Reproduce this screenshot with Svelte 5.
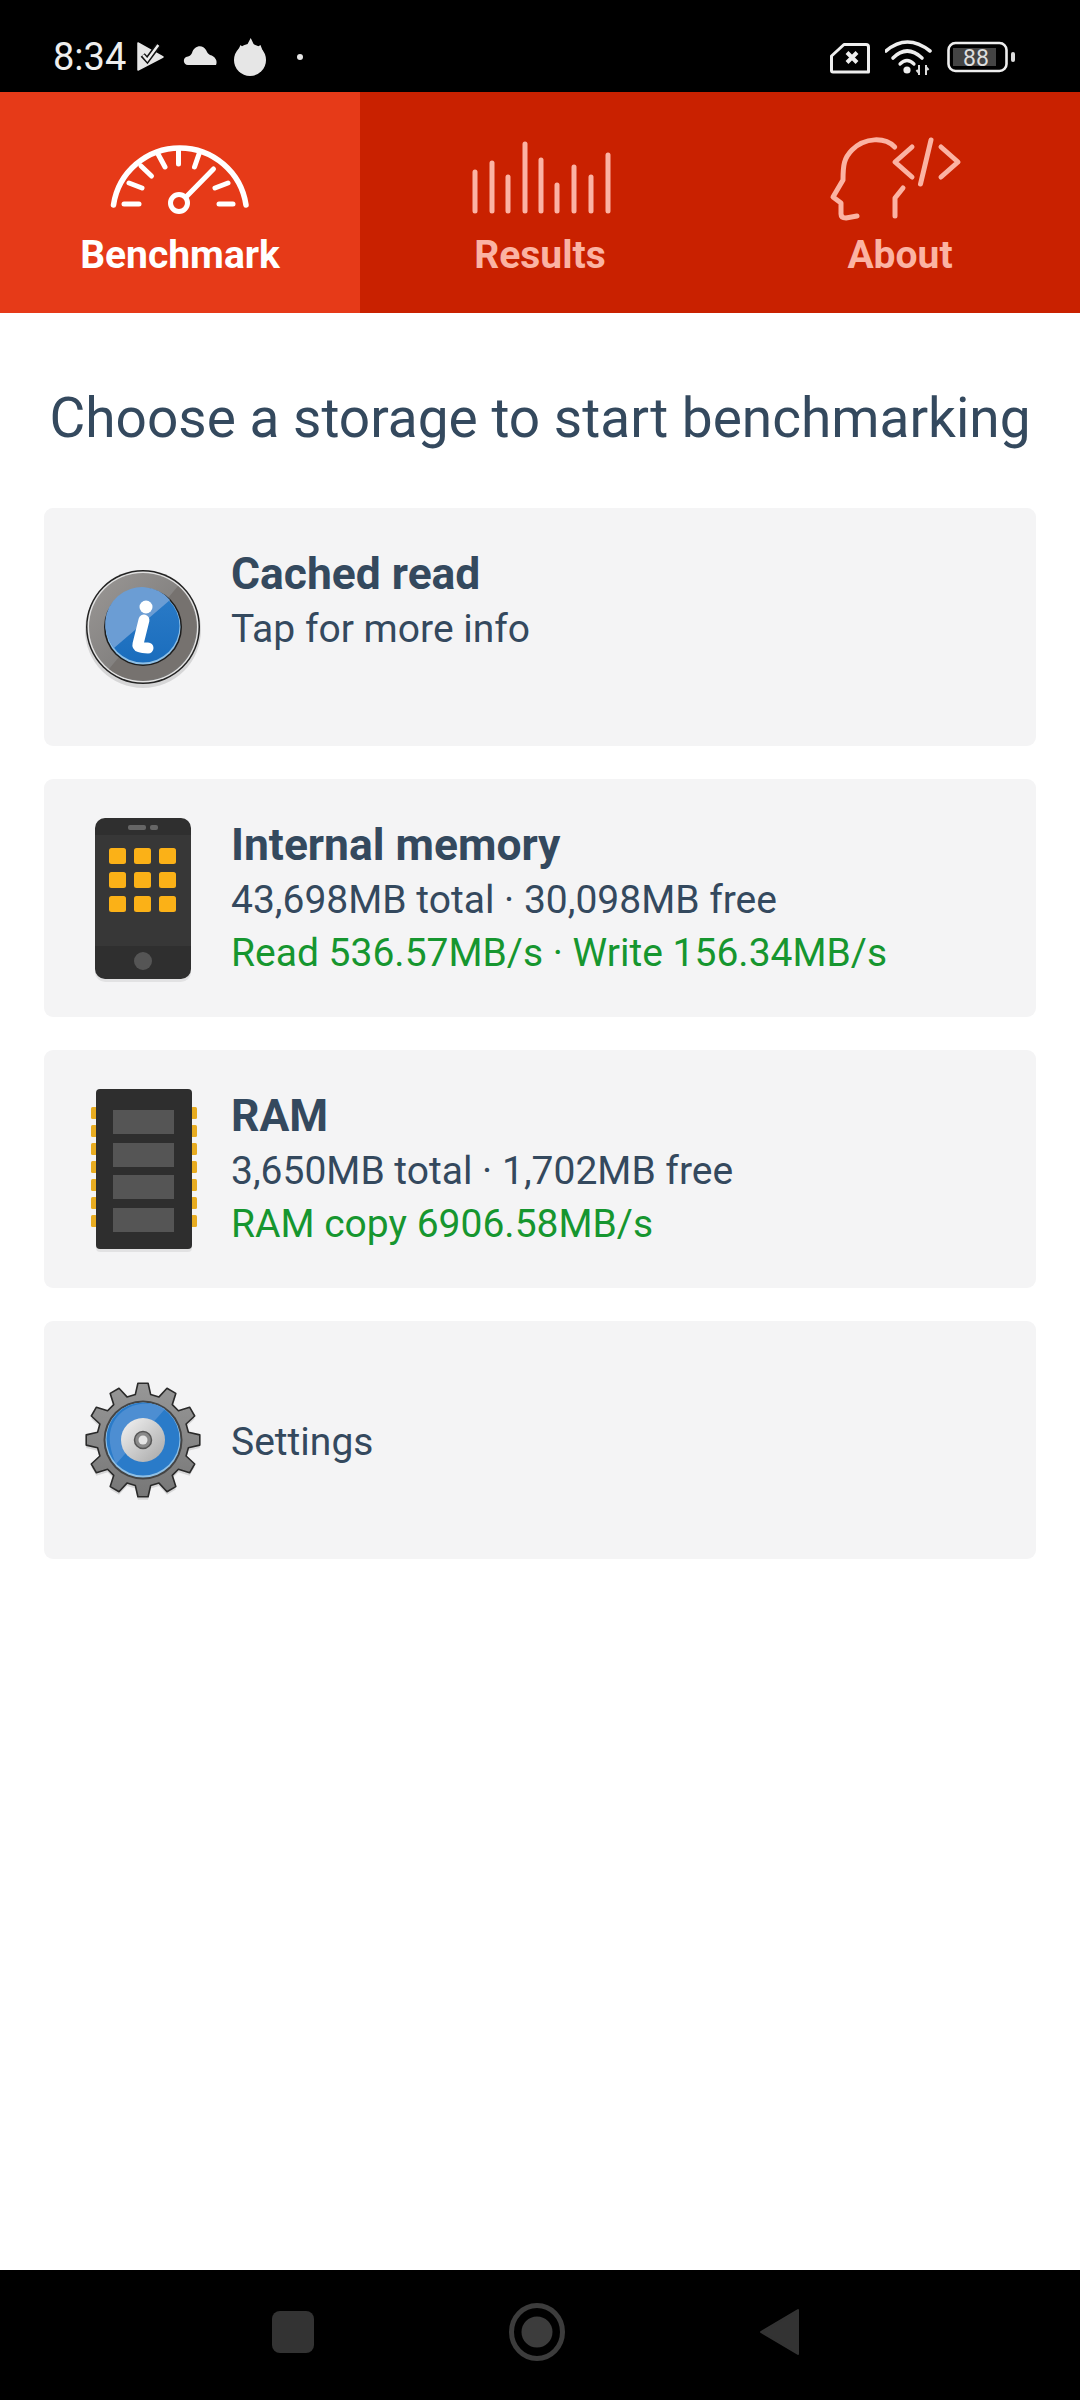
<script lang="ts">
  const tabs = ["Benchmark", "Results", "About"];

  const ticks = [
    [124, 204, 139, 204], [219, 204, 233, 204],
    [129, 183, 142, 188], [141, 166, 151.5, 176],
    [158, 154, 165, 167], [178.5, 151, 178.5, 164],
    [199, 154, 194.5, 167], [228, 183, 215, 188]
  ];
  const bars = [
    [475, 172], [492, 163], [508, 177], [525, 144], [541, 160],
    [557, 185], [574, 167], [591, 177], [608, 155]
  ];

  const appCols = [31, 56, 81];
  const appRows = [35, 59, 83];
  const chips = [26, 59, 91, 124];
  const pins = [23, 41, 59, 77, 95, 113, 131];

  function gearPath(cx: number, cy: number) {
    const teeth = 12;
    const pts: string[] = [];
    for (let i = 0; i < teeth; i++) {
      const a = (i / teeth) * Math.PI * 2 - Math.PI / 2;
      const step = (Math.PI * 2) / teeth;
      const corners = [
        [46, a - step * 0.32],
        [57, a - step * 0.17],
        [57, a + step * 0.17],
        [46, a + step * 0.32]
      ];
      for (const [r, t] of corners) {
        pts.push(`${(cx + r * Math.cos(t)).toFixed(1)},${(cy + r * Math.sin(t)).toFixed(1)}`);
      }
    }
    return pts.join(" ");
  }
</script>

<div class="page">
  <div class="status">
    <div class="status-left">
      <span class="time">8:34</span>
      <svg class="ic" viewBox="0 0 40 40">
        <path d="M4 6 L29 20 L4 33 Z" fill="#e6e6e6" stroke="#e6e6e6" stroke-width="1.5" stroke-linejoin="round" />
        <path d="M8.7 18 L13.3 23 L24.3 8" fill="none" stroke="#111" stroke-width="5.5" />
        <path d="M9 18 L13.3 23 L24.3 8" fill="none" stroke="#eee" stroke-width="2.4" />
      </svg>
      <svg class="ic" viewBox="0 0 40 40">
        <path d="M8 28 C3 28 2 20 8 19.5 C10 19 11 18 12 16 C14 8 23 7 26 13 C27 15 28 17 30 18 C35 19 38 24 36 28 Z" fill="#e6e6e6" />
      </svg>
      <svg class="ic" viewBox="0 0 40 40">
        <path d="M9 20 L14.5 8 L19 12 L24.7 1 L29.5 11 L34.5 8 L39 20 Z" fill="#e6e6e6" />
        <circle cx="24" cy="23" r="16" fill="#e6e6e6" />
      </svg>
      <svg class="ic" viewBox="0 0 40 40"><circle cx="28" cy="20" r="3" fill="#e6e6e6" /></svg>
    </div>
    <div class="status-right">
      <svg class="ic" viewBox="0 0 40 40">
        <path d="M14 7.5 H36 Q38.5 7.5 38.5 10 V35 H3 Q1.5 35 1.5 33.5 V19 Z" fill="none" stroke="#eee" stroke-width="3" stroke-linejoin="round" />
        <path d="M17 15.5 L27 25.5 M27 15.5 L17 25.5" stroke="#eee" stroke-width="4" />
      </svg>
      <svg class="ic wifi" viewBox="0 0 47 40">
        <path d="M1 14 Q22 -4 45 14" fill="none" stroke="#eee" stroke-width="3.6" stroke-linecap="round" />
        <path d="M8 21 Q22 7 37 21" fill="none" stroke="#eee" stroke-width="3.6" stroke-linecap="round" />
        <path d="M15 27 Q22 20 29 27" fill="none" stroke="#eee" stroke-width="3.2" stroke-linecap="round" />
        <circle cx="22" cy="33" r="3.6" fill="#eee" />
        <path d="M34 28 V38 M31.5 33 L34 36 M41 28 V38 M41 30 L43.5 33" fill="none" stroke="#ddd" stroke-width="2" />
      </svg>
      <svg class="ic battery" viewBox="0 0 68 40">
        <rect x="1.5" y="6" width="58" height="28" rx="7" fill="none" stroke="#eee" stroke-width="2.6" />
        <rect x="6" y="11" width="43" height="18" fill="#444" />
        <text x="29" y="28.5" text-anchor="middle" class="batt-text">88</text>
        <rect x="64" y="15" width="4" height="10" rx="2" fill="#ddd" />
      </svg>
    </div>
  </div>

  <div class="tabs">
    {#each tabs as tab, i}
      <div class="tab" class:active={i === 0}>
        {#if i === 0}
          <svg viewBox="100 130 160 100" class="tab-icon">
            <path d="M113.5 205 A67 67 0 0 1 246 205" fill="none" stroke="currentColor" stroke-width="5.5" stroke-linecap="round" />
            {#each ticks as t}
              <line x1={t[0]} y1={t[1]} x2={t[2]} y2={t[3]} stroke="currentColor" stroke-width="5" stroke-linecap="round" />
            {/each}
            <line x1="186" y1="197" x2="213.5" y2="169" stroke="currentColor" stroke-width="5" stroke-linecap="round" />
            <circle cx="179" cy="203" r="8.5" fill="none" stroke="currentColor" stroke-width="5" />
          </svg>
        {:else if i === 1}
          <svg viewBox="460 130 160 100" class="tab-icon">
            {#each bars as b}
              <line x1={b[0]} y1={b[1]} x2={b[0]} y2="211" stroke="currentColor" stroke-width="5" stroke-linecap="round" />
            {/each}
          </svg>
        {:else}
          <svg viewBox="820 130 160 100" class="tab-icon">
            <path d="M894.7 147 C885 137 865 137 852 150 C844 158 843 165 843 180 L833 197 L841 203 V214 Q841 218 846 218 L857 216" fill="none" stroke="currentColor" stroke-width="5" stroke-linecap="round" stroke-linejoin="round" />
            <path d="M903 188 L895 198 V216" fill="none" stroke="currentColor" stroke-width="5" stroke-linecap="round" stroke-linejoin="round" />
            <path d="M912 147 L895 162 L912 177 M931 140 L920.5 184 M941 147 L958 162 L941 177" fill="none" stroke="currentColor" stroke-width="5" stroke-linecap="round" stroke-linejoin="round" />
          </svg>
        {/if}
        <span class="tab-label">{tab}</span>
      </div>
    {/each}
  </div>

  <h1>Choose a storage to start benchmarking</h1>

  <div class="cards">
    <div class="card">
      <svg class="card-icon" viewBox="0 0 130 170">
        <defs>
          <linearGradient id="ring" x1="0" y1="0" x2="1" y2="1">
            <stop offset="0" stop-color="#9b9896" />
            <stop offset="1" stop-color="#6f6e6d" />
          </linearGradient>
          <linearGradient id="blue" x1="0" y1="0" x2="0" y2="1">
            <stop offset="0" stop-color="#2c7cc8" />
            <stop offset="1" stop-color="#1a6dbd" />
          </linearGradient>
        </defs>
        <ellipse cx="65" cy="88" rx="58" ry="58" fill="#000" opacity="0.12" />
        <circle cx="65" cy="85" r="57" fill="#222" />
        <circle cx="65" cy="85" r="55.5" fill="#e2e2e2" />
        <circle cx="65" cy="85" r="54" fill="url(#ring)" />
        <path d="M31 127 L100 44 A54 54 0 0 1 31 127 Z" fill="#76726f" />
        <circle cx="65" cy="85" r="39" fill="#1d1d1d" />
        <circle cx="65" cy="85" r="37.5" fill="#8fc0e6" />
        <circle cx="65" cy="84" r="36.5" fill="url(#blue)" />
        <path d="M36 106 L92 58 A36.5 36.5 0 0 0 36 106 Z" fill="#6b9dd4" />
        <circle cx="68" cy="65" r="6.5" fill="#fff" />
        <path d="M66 78 L60 102 Q59 106 70 106" fill="none" stroke="#fff" stroke-width="11" stroke-linecap="round" stroke-linejoin="round" />
      </svg>
      <div class="info">
        <div class="title">Cached read</div>
        <div class="sub">Tap for more info</div>
      </div>
    </div>

    <div class="card">
      <svg class="card-icon" viewBox="0 0 130 170">
        <rect x="17" y="8" width="96" height="161" rx="10" fill="#000" opacity="0.07" />
        <rect x="17" y="5" width="96" height="161" rx="10" fill="#2f2f2f" />
        <rect x="17" y="22" width="96" height="111" fill="#373737" />
        <rect x="50" y="12" width="18" height="5" rx="2" fill="#666" />
        <rect x="72" y="12" width="8" height="5" rx="2" fill="#666" />
        {#each appRows as y}
          {#each appCols as x}
            <rect {x} {y} width="17" height="16" rx="2.5" fill="#fbb117" />
          {/each}
        {/each}
        <circle cx="65" cy="148" r="9" fill="#555" />
      </svg>
      <div class="info">
        <div class="title">Internal memory</div>
        <div class="sub">43,698MB total · 30,098MB free</div>
        <div class="result">Read 536.57MB/s · Write 156.34MB/s</div>
      </div>
    </div>

    <div class="card">
      <svg class="card-icon" viewBox="0 0 130 170">
        {#each pins as y}
          <rect x="13" {y} width="6" height="12" rx="1.5" fill="#e8ac20" />
          <rect x="113" {y} width="6" height="12" rx="1.5" fill="#e8ac20" />
        {/each}
        <rect x="18" y="8" width="96" height="160" rx="4" fill="#000" opacity="0.07" />
        <rect x="18" y="5" width="96" height="160" rx="4" fill="#2e2e2e" />
        {#each chips as y}
          <rect x="35" {y} width="61" height="24" fill="#555" />
        {/each}
      </svg>
      <div class="info">
        <div class="title">RAM</div>
        <div class="sub">3,650MB total · 1,702MB free</div>
        <div class="result">RAM copy 6906.58MB/s</div>
      </div>
    </div>

    <div class="card center">
      <svg class="card-icon" viewBox="0 0 130 170">
        <defs>
          <linearGradient id="gear" x1="0" y1="0" x2="0" y2="1">
            <stop offset="0" stop-color="#979797" />
            <stop offset="1" stop-color="#777" />
          </linearGradient>
          <linearGradient id="disc" x1="0" y1="0" x2="1" y2="1">
            <stop offset="0" stop-color="#f4f4f4" />
            <stop offset="1" stop-color="#a6a6a6" />
          </linearGradient>
        </defs>
        <polygon points={gearPath(65, 88)} fill="#000" opacity="0.12" />
        <polygon points={gearPath(65, 85)} fill="url(#gear)" stroke="#2a2a2a" stroke-width="1.6" stroke-linejoin="round" />
        <circle cx="65" cy="85" r="39.5" fill="#444" />
        <circle cx="65" cy="85" r="37.5" fill="#8fc0e6" />
        <circle cx="65" cy="84" r="36.5" fill="#2a7bc9" />
        <path d="M38 109 C30 90 29 75 39 62 C50 48 72 44 87 54 Z" fill="#5d97d6" opacity="0.7" />
        <circle cx="65" cy="85" r="22" fill="url(#disc)" />
        <circle cx="65" cy="85" r="8.5" fill="#8a8a8a" stroke="#555" stroke-width="1.5" />
        <circle cx="65" cy="85" r="4.5" fill="#e4e4e4" />
      </svg>
      <div class="info">
        <div class="plain">Settings</div>
      </div>
    </div>
  </div>

  <div class="nav">
    <span class="nav-square"></span>
    <svg class="nav-home" viewBox="0 0 56 58">
      <ellipse cx="28" cy="29" rx="25.5" ry="26.5" fill="none" stroke="#3c3c3c" stroke-width="5" />
      <ellipse cx="28" cy="29" rx="15.5" ry="15.5" fill="#3c3c3c" />
    </svg>
    <svg class="nav-back" viewBox="0 0 39 48">
      <path d="M38 2 V46 L1 24 Z" fill="#333" stroke="#333" stroke-width="2" stroke-linejoin="round" />
    </svg>
  </div>
</div>

<style>
  :global(body) {
    background: #fff;
  }

  .page {
    width: 1080px;
    height: 2400px;
    display: flex;
    flex-direction: column;
    font-family: Roboto, "Liberation Sans", sans-serif;
    color: #34495e;
    overflow: hidden;
  }

  .status {
    height: 92px;
    box-sizing: border-box;
    padding: 37px 65px 0 53px;
    background: #000;
    display: flex;
    justify-content: space-between;
    align-items: flex-start;
  }

  .status-left {
    display: flex;
    gap: 6px;
    align-items: center;
  }

  .status-right {
    display: flex;
    gap: 15px;
  }

  .time {
    font-size: 38px;
    line-height: 40px;
    color: #eee;
    margin-right: 2px;
  }

  .ic {
    width: 40px;
    height: 40px;
    display: block;
  }

  .ic.wifi {
    width: 47px;
  }

  .ic.battery {
    width: 68px;
  }

  .batt-text {
    font-family: Roboto, sans-serif;
    font-size: 23px;
    fill: #ddd;
  }

  .tabs {
    height: 221px;
    display: grid;
    grid-template-columns: repeat(3, 1fr);
    background: #c92100;
  }

  .tab {
    display: flex;
    flex-direction: column;
    align-items: center;
    padding-top: 38px;
    color: #fbb3a3;
  }

  .tab.active {
    background: #e63a18;
    color: #fff;
  }

  .tab-icon {
    width: 160px;
    height: 100px;
    display: block;
  }

  .tab-label {
    margin-top: 3px;
    font-size: 39px;
    line-height: 44px;
    font-weight: 700;
  }

  h1 {
    margin: 73px 0 58px;
    font-size: 55px;
    line-height: 64px;
    font-weight: 400;
    text-align: center;
    color: #34495e;
  }

  .cards {
    margin: 0 44px;
    display: flex;
    flex-direction: column;
    gap: 33px;
  }

  .card {
    height: 238px;
    box-sizing: border-box;
    padding: 0 0 0 34px;
    background: #f4f4f5;
    border-radius: 9px;
    display: flex;
    align-items: center;
    gap: 23px;
  }

  .card-icon {
    width: 130px;
    height: 170px;
    flex: none;
  }

  .info {
    align-self: flex-start;
    padding-top: 38px;
  }

  .card.center .info {
    align-self: center;
    padding-top: 4px;
  }

  .title {
    font-size: 44.4px;
    line-height: 57px;
    font-weight: 700;
  }

  .sub,
  .plain,
  .result {
    font-size: 39px;
    line-height: 53px;
  }

  .result {
    color: #16962f;
  }

  .nav {
    margin-top: auto;
    height: 130px;
    box-sizing: border-box;
    background: #000;
    padding: 0 0 6px 272px;
    display: flex;
    align-items: center;
    gap: 195px;
  }

  .nav-square {
    width: 42px;
    height: 42px;
    border-radius: 8px;
    background: #333;
  }

  .nav-home {
    width: 56px;
    height: 58px;
  }

  .nav-back {
    width: 39px;
    height: 48px;
  }
</style>
